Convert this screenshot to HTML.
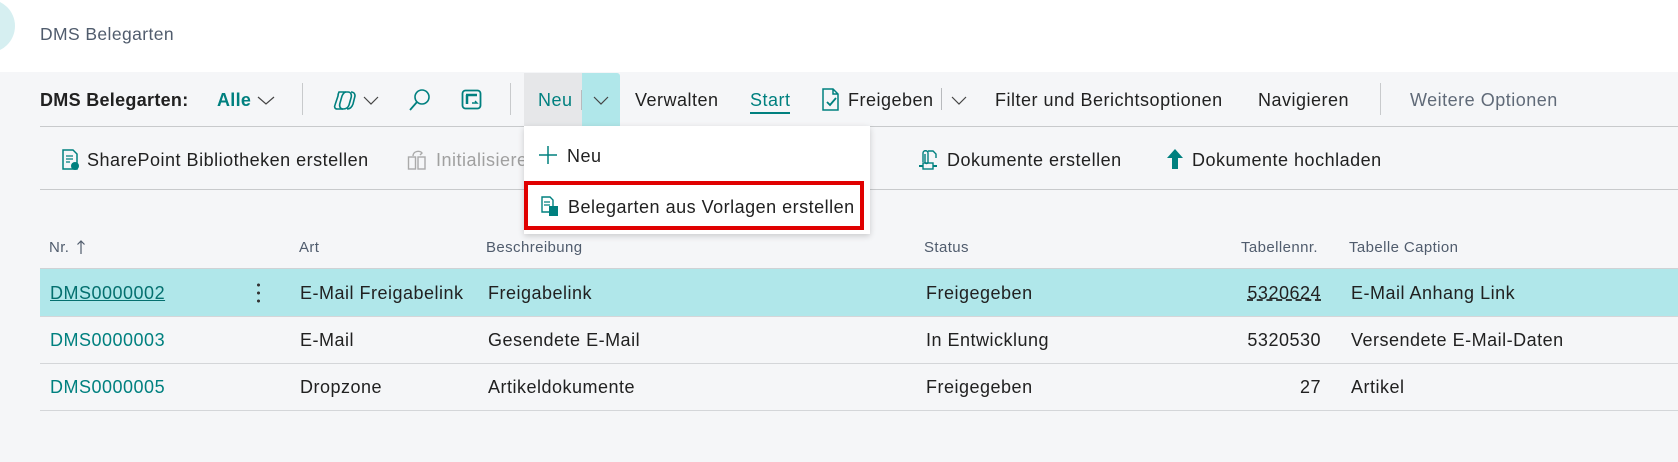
<!DOCTYPE html>
<html><head><meta charset="utf-8"><style>
*{margin:0;padding:0;box-sizing:border-box}
body{width:1678px;height:462px;overflow:hidden;background:#f5f6f8;font-family:"Liberation Sans",sans-serif;color:#212121;position:relative}
.a{position:absolute;white-space:nowrap}
.t{font-size:18px;line-height:20px;letter-spacing:.5px}
.teal{color:#00807f}
.h{font-size:15px;color:#505c6d;line-height:18px;letter-spacing:.4px}
.line{position:absolute;height:1px;background:#d4d6d9}
</style></head><body>
<div class="a" style="left:0;top:0;width:1678px;height:72px;background:#fff"></div>
<div class="a" style="left:-40px;top:-1px;width:55px;height:54px;border-radius:50%;background:#d6eff1"></div>
<div class="a" style="left:40px;top:24px;font-size:17.5px;letter-spacing:.4px;color:#505c6d">DMS Belegarten</div>

<!-- toolbar -->
<div class="a t" style="left:40px;top:90px;font-weight:bold;letter-spacing:.3px">DMS Belegarten:</div>
<div class="a t teal" style="left:217px;top:90px;font-weight:bold;letter-spacing:.3px">Alle</div>
<svg class="a" style="left:256px;top:94px" width="20" height="12"><path d="M2 3l8 7 8-7" fill="none" stroke="#444" stroke-width="1.2"/></svg>
<div class="a" style="left:302px;top:83px;width:1px;height:32px;background:#c8cacc"></div>
<svg class="a" style="left:333px;top:89px" width="26" height="22"><path d="M6 3h9c3 0 4 3 3 6l-2 7c-1 3-3 4-6 4H4c-2 0-3-2-2-4l3-9c0-2 1-4 1-4z" fill="none" stroke="#00807f" stroke-width="1.6"/><path d="M13 3c-2 0-3 2-4 4l-2 7c-1 3 0 6 3 6M18 3c2 0 4 1 4 4l-2 8c-1 3-3 5-6 5" fill="none" stroke="#00807f" stroke-width="1.6"/></svg>
<svg class="a" style="left:362px;top:95px" width="18" height="11"><path d="M2 2l7 7 7-7" fill="none" stroke="#444" stroke-width="1.2"/></svg>
<svg class="a" style="left:408px;top:88px" width="24" height="24"><circle cx="14" cy="9" r="7" fill="none" stroke="#00807f" stroke-width="1.6"/><path d="M9 14l-7 8" stroke="#00807f" stroke-width="1.8"/></svg>
<svg class="a" style="left:461px;top:89px" width="22" height="22"><rect x="1.5" y="1.5" width="18" height="18" rx="3" fill="none" stroke="#00807f" stroke-width="1.8"/><path d="M5 6h11M6 6v9" stroke="#00807f" stroke-width="2.5"/><path d="M11 14h5l-2-2" fill="none" stroke="#00807f" stroke-width="1.4"/></svg>
<div class="a" style="left:510px;top:83px;width:1px;height:32px;background:#c8cacc"></div>
<div class="a" style="left:524px;top:73px;width:58px;height:53px;background:#e6e7e9"></div>
<div class="a" style="left:582px;top:73px;width:38px;height:53px;background:#b0e7ea;border-radius:0 3px 0 0"></div>
<div class="a t teal" style="left:538px;top:90px">Neu</div>
<div class="a" style="left:581px;top:90px;width:1px;height:20px;background:#b8babd"></div>
<svg class="a" style="left:592px;top:95px" width="18" height="11"><path d="M2 2l7 7 7-7" fill="none" stroke="#444" stroke-width="1.2"/></svg>
<div class="a t" style="left:635px;top:90px">Verwalten</div>
<div class="a t teal" style="left:750px;top:90px">Start</div>
<div class="a" style="left:750px;top:112px;width:40px;height:2px;background:#00807f"></div>
<svg class="a" style="left:821px;top:87px" width="20" height="25"><path d="M2 2h10l5 5v16H2z M12 2v5h5" fill="none" stroke="#00807f" stroke-width="1.5"/><path d="M6 15l3 3 6-7" fill="none" stroke="#00807f" stroke-width="1.8"/></svg>
<div class="a t" style="left:848px;top:90px">Freigeben</div>
<div class="a" style="left:941px;top:88px;width:1px;height:22px;background:#b8babd"></div>
<svg class="a" style="left:950px;top:95px" width="18" height="11"><path d="M2 2l7 7 7-7" fill="none" stroke="#444" stroke-width="1.2"/></svg>
<div class="a t" style="left:995px;top:90px">Filter und Berichtsoptionen</div>
<div class="a t" style="left:1258px;top:90px">Navigieren</div>
<div class="a" style="left:1380px;top:83px;width:1px;height:32px;background:#c8cacc"></div>
<div class="a t" style="left:1410px;top:90px;color:#606a78">Weitere Optionen</div>
<div class="line" style="left:40px;top:126px;width:1638px;background:#c8cacc"></div>

<!-- row 2 -->
<svg class="a" style="left:61px;top:148px" width="20" height="24"><path d="M2 2h10l4 4v15H2z" fill="none" stroke="#00807f" stroke-width="1.5"/><path d="M5 8h7M5 11h7M5 14h4" stroke="#00807f" stroke-width="1.2"/><circle cx="14" cy="18" r="4" fill="#00807f"/></svg>
<div class="a t" style="left:87px;top:150px">SharePoint Bibliotheken erstellen</div>
<svg class="a" style="left:407px;top:148px" width="20" height="24"><rect x="1.5" y="9" width="7" height="12" fill="none" stroke="#aaa" stroke-width="1.4"/><rect x="11" y="9" width="7" height="12" fill="none" stroke="#aaa" stroke-width="1.4"/><path d="M6 8c0-5 7-6 9-3l-2 2" fill="none" stroke="#aaa" stroke-width="1.4"/></svg>
<div class="a t" style="left:436px;top:150px;color:#a0a0a0">Initialisieren</div>
<svg class="a" style="left:917px;top:148px" width="22" height="24"><path d="M6 14V5c0-3 5-3 5 0v9c0 2-3 2-3 0V6" fill="none" stroke="#00807f" stroke-width="1.4"/><path d="M11 3h5l3 3v4" fill="none" stroke="#00807f" stroke-width="1.4"/><rect x="6" y="15" width="10" height="6" fill="none" stroke="#00807f" stroke-width="1.4"/><path d="M2 18h4M16 18h4" stroke="#00807f" stroke-width="2"/></svg>
<div class="a t" style="left:947px;top:150px">Dokumente erstellen</div>
<svg class="a" style="left:1166px;top:148px" width="18" height="22"><path d="M9 1L1 10h5v11h6V10h5z" fill="#00807f"/></svg>
<div class="a t" style="left:1192px;top:150px">Dokumente hochladen</div>
<div class="line" style="left:40px;top:189px;width:1638px;background:#c8cacc"></div>

<!-- table -->
<div class="a h" style="left:49px;top:239px">Nr.</div>
<svg class="a" style="left:76px;top:239px" width="10" height="16"><path d="M5 15V2M1.5 5.5L5 2l3.5 3.5" fill="none" stroke="#505c6d" stroke-width="1.2"/></svg>
<div class="a h" style="left:299px;top:239px">Art</div>
<div class="a h" style="left:486px;top:239px">Beschreibung</div>
<div class="a h" style="left:924px;top:239px">Status</div>
<div class="a h" style="left:1218px;top:239px;width:100px;text-align:right">Tabellennr.</div>
<div class="a h" style="left:1349px;top:239px">Tabelle Caption</div>

<div class="a" style="left:40px;top:268px;width:1638px;height:48px;background:#b0e7ea;border-top:1px solid #cfd2d5"></div>
<div class="line" style="left:40px;top:316px;width:1638px"></div>
<div class="line" style="left:40px;top:363px;width:1638px"></div>
<div class="line" style="left:40px;top:410px;width:1638px"></div>

<div class="a t teal" style="left:50px;top:283px;text-decoration:underline;color:#04706f">DMS0000002</div>
<div class="a" style="left:257px;top:281px;width:3px;height:22px;background:radial-gradient(circle,#333 1.4px,transparent 1.6px) 0 0/3px 8px repeat-y"></div>
<div class="a t" style="left:300px;top:283px">E-Mail Freigabelink</div>
<div class="a t" style="left:488px;top:283px">Freigabelink</div>
<div class="a t" style="left:926px;top:283px">Freigegeben</div>
<div class="a t" style="left:1200px;top:283px;width:121px;text-align:right;text-decoration:underline dashed">5320624</div>
<div class="a t" style="left:1351px;top:283px">E-Mail Anhang Link</div>

<div class="a t teal" style="left:50px;top:330px">DMS0000003</div>
<div class="a t" style="left:300px;top:330px">E-Mail</div>
<div class="a t" style="left:488px;top:330px">Gesendete E-Mail</div>
<div class="a t" style="left:926px;top:330px">In Entwicklung</div>
<div class="a t" style="left:1200px;top:330px;width:121px;text-align:right">5320530</div>
<div class="a t" style="left:1351px;top:330px">Versendete E-Mail-Daten</div>

<div class="a t teal" style="left:50px;top:377px">DMS0000005</div>
<div class="a t" style="left:300px;top:377px">Dropzone</div>
<div class="a t" style="left:488px;top:377px">Artikeldokumente</div>
<div class="a t" style="left:926px;top:377px">Freigegeben</div>
<div class="a t" style="left:1200px;top:377px;width:121px;text-align:right">27</div>
<div class="a t" style="left:1351px;top:377px">Artikel</div>

<!-- dropdown -->
<div class="a" style="left:524px;top:126px;width:346px;height:108px;background:#fff;box-shadow:0 2px 6px rgba(0,0,0,.18)"></div>
<svg class="a" style="left:538px;top:145px" width="20" height="20"><path d="M10 1v18M1 10h18" stroke="#00807f" stroke-width="1.5"/></svg>
<div class="a t" style="left:567px;top:146px">Neu</div>
<div class="a" style="left:524px;top:181px;width:340px;height:49px;border:4.5px solid #e00000"></div>
<svg class="a" style="left:540px;top:196px" width="20" height="22"><path d="M2 1h8l3 3v12H2z" fill="none" stroke="#00807f" stroke-width="1.4"/><path d="M4 6h6M4 9h6" stroke="#00807f" stroke-width="1.2"/><rect x="9" y="10" width="9" height="10" fill="#00807f"/></svg>
<div class="a t" style="left:568px;top:197px">Belegarten aus Vorlagen erstellen</div>
</body></html>
